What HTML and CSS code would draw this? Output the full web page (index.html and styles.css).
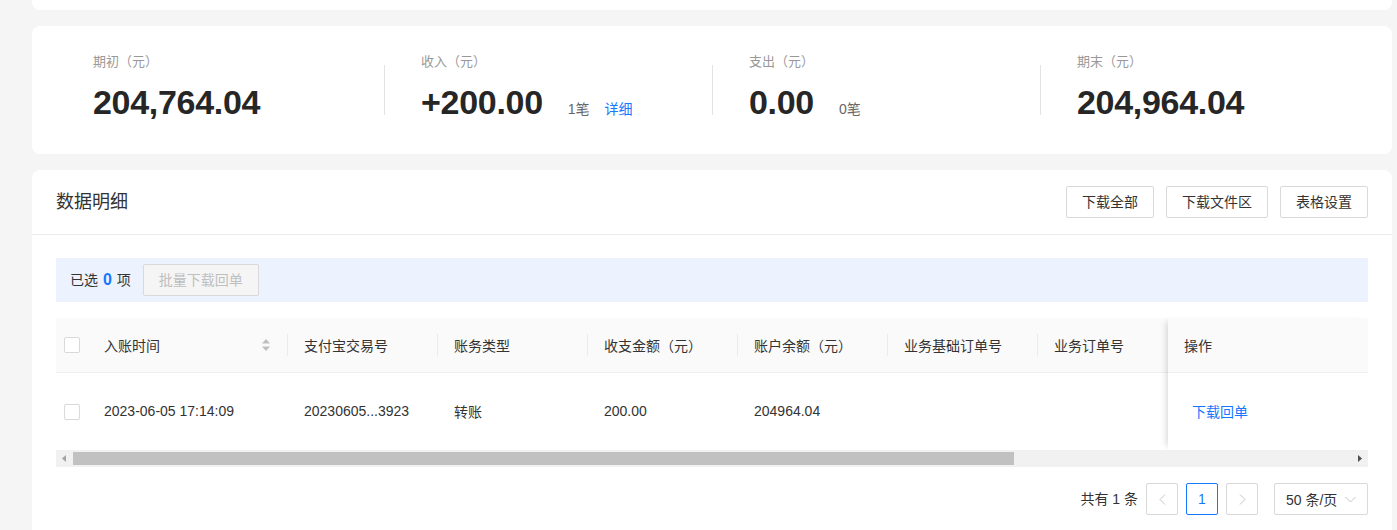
FILE: index.html
```html
<!DOCTYPE html>
<html lang="zh-CN">
<head>
<meta charset="utf-8">
<title>数据明细</title>
<link rel="stylesheet" href="styles.css">
</head>
<body>
<div class="page">
  <div class="card card-top"></div>

  <div class="card stats">
    <div class="stat">
      <div class="stat-label">期初（元）</div>
      <div class="stat-value"><span class="num">204,764.04</span></div>
    </div>
    <div class="stat">
      <div class="stat-label">收入（元）</div>
      <div class="stat-value"><span class="num">+200.00</span><span class="count">1笔</span><a class="link" href="#">详细</a></div>
    </div>
    <div class="stat">
      <div class="stat-label">支出（元）</div>
      <div class="stat-value"><span class="num">0.00</span><span class="count">0笔</span></div>
    </div>
    <div class="stat">
      <div class="stat-label">期末（元）</div>
      <div class="stat-value"><span class="num">204,964.04</span></div>
    </div>
  </div>

  <div class="card detail">
    <div class="detail-head">
      <h2 class="detail-title">数据明细</h2>
      <div class="actions">
        <button class="btn" type="button">下载全部</button>
        <button class="btn" type="button">下载文件区</button>
        <button class="btn" type="button">表格设置</button>
      </div>
    </div>

    <div class="detail-body">
      <div class="select-bar">
        <span class="sel-text">已选 <b class="sel-num">0</b> 项</span>
        <button class="btn btn-disabled" type="button" disabled>批量下载回单</button>
      </div>

      <div class="table">
        <div class="table-main">
          <div class="scroll-area">
            <div class="grid">
              <div class="th check"><span class="cb"></span></div>
              <div class="th sep sortable">入账时间
                <svg class="sort" width="8" height="12" viewBox="0 0 8 12"><polygon points="4,0 8,4.5 0,4.5" fill="#bfbfbf"/><polygon points="0,7.5 8,7.5 4,12" fill="#bfbfbf"/></svg>
              </div>
              <div class="th sep">支付宝交易号</div>
              <div class="th sep">账务类型</div>
              <div class="th sep">收支金额（元）</div>
              <div class="th sep">账户余额（元）</div>
              <div class="th sep">业务基础订单号</div>
              <div class="th sep">业务订单号</div>

              <div class="td check"><span class="cb"></span></div>
              <div class="td">2023-06-05 17:14:09</div>
              <div class="td">20230605...3923</div>
              <div class="td">转账</div>
              <div class="td">200.00</div>
              <div class="td">204964.04</div>
              <div class="td"></div>
              <div class="td"></div>
            </div>
          </div>
          <div class="fixed-col">
            <div class="th">操作</div>
            <div class="td td-op"><a class="link-op" href="#">下载回单</a></div>
          </div>
        </div>
        <div class="hscroll">
          <div class="sb-arrow"><svg width="4" height="7" viewBox="0 0 4 7"><polygon points="4,0 4,7 0,3.5" fill="#a3a3a3"/></svg></div>
          <div class="sb-track"><div class="sb-thumb" style="width:73.5%"></div></div>
          <div class="sb-arrow"><svg width="4" height="7" viewBox="0 0 4 7"><polygon points="0,0 4,3.5 0,7" fill="#505050"/></svg></div>
        </div>
      </div>

      <div class="pager">
        <span class="total">共有 1 条</span>
        <span class="pg"><svg width="7" height="11" viewBox="0 0 7 11"><polyline points="6,0.5 1,5.5 6,10.5" fill="none" stroke="#c4c4c4" stroke-width="1"/></svg></span>
        <span class="pg active">1</span>
        <span class="pg"><svg width="7" height="11" viewBox="0 0 7 11"><polyline points="1,0.5 6,5.5 1,10.5" fill="none" stroke="#c4c4c4" stroke-width="1"/></svg></span>
        <span class="size">50 条/页<svg width="11" height="7" viewBox="0 0 11 7"><polyline points="0.5,1 5.5,6 10.5,1" fill="none" stroke="#c4c4c4" stroke-width="1"/></svg></span>
      </div>
    </div>
  </div>
</div>
</body>
</html>
```

FILE: styles.css
```css
* { box-sizing: border-box; }

html, body {
  margin: 0;
  height: 530px;
  overflow: hidden;
}

body {
  background: #f5f5f5;
  font-family: "Liberation Sans", "Noto Sans CJK SC", sans-serif;
  font-size: 14px;
  color: #333;
}

.page {
  display: flex;
  flex-direction: column;
  gap: 16px;
  padding: 0 5px 0 32px;
}

.card {
  background: #fff;
  border-radius: 8px;
}

.card-top {
  height: 10px;
  border-radius: 0 0 8px 8px;
}

/* ---------- stats ---------- */
.stats {
  display: grid;
  grid-template-columns: repeat(4, 1fr);
  padding: 26px 24px 32px;
}

.stat {
  position: relative;
  padding-left: 37px;
}

.stat + .stat::before {
  content: "";
  position: absolute;
  left: 0;
  top: 13px;
  height: 50px;
  width: 1px;
  background: #e3e3e3;
}

.stat-label {
  font-size: 13px;
  line-height: 20px;
  color: #999;
}

.stat-value {
  display: flex;
  align-items: baseline;
  margin-top: 10px;
}

.num {
  font-size: 34px;
  line-height: 40px;
  font-weight: 700;
  letter-spacing: -0.3px;
  color: #262626;
}

.count {
  margin-left: 25px;
  font-size: 14px;
  line-height: 20px;
  color: #666;
}

.link {
  margin-left: 15px;
  font-size: 14px;
  line-height: 20px;
  color: #1677ff;
  text-decoration: none;
}

/* ---------- detail ---------- */
.detail {
  border-radius: 8px 8px 0 0;
}

.detail-head {
  height: 65px;
  border-bottom: 1px solid #ebebeb;
  display: flex;
  align-items: center;
  justify-content: space-between;
  padding: 0 24px;
}

.detail-title {
  margin: 0;
  font-size: 18px;
  font-weight: 400;
  line-height: 24px;
  color: #333;
}

.actions {
  display: flex;
  gap: 12px;
}

.btn {
  height: 32px;
  padding: 0 15px;
  border: 1px solid #d9d9d9;
  border-radius: 2px;
  background: #fff;
  font: inherit;
  font-size: 14px;
  line-height: 30px;
  color: #333;
}

.detail-body {
  padding: 23px 24px 15px;
}

.select-bar {
  height: 44px;
  background: #ecf3fe;
  display: flex;
  align-items: center;
  padding-left: 14px;
}

.sel-text {
  line-height: 20px;
  color: #333;
}

.sel-num {
  color: #1677ff;
  font-size: 16px;
  margin: 0 1px;
}

.btn-disabled {
  margin-left: 12px;
  background: #f5f5f5;
  color: #bfbfbf;
}

/* ---------- table ---------- */
.table {
  margin-top: 16px;
}

.table-main {
  display: flex;
}

.scroll-area {
  flex: 1;
  min-width: 0;
  overflow: hidden;
}

.grid {
  display: grid;
  grid-template-columns: 32px 200px repeat(6, 150px);
  width: max-content;
}

.th {
  height: 55px;
  background: #fafafa;
  border-bottom: 1px solid #efefef;
  display: flex;
  align-items: center;
  padding: 0 16px 1px;
  position: relative;
  color: #333;
  white-space: nowrap;
}

.td {
  height: 77px;
  display: flex;
  align-items: center;
  padding: 0 16px 1px;
  color: #333;
  white-space: nowrap;
}

.th.check, .td.check {
  padding: 0 8px;
}

.th.sep::after {
  content: "";
  position: absolute;
  right: 0;
  top: 50%;
  height: 22px;
  margin-top: -11px;
  width: 1px;
  background: #ebebeb;
}

.sortable {
  padding-right: 18px;
}

.sort {
  margin-left: auto;
}

.cb {
  width: 16px;
  height: 16px;
  border: 1px solid #d9d9d9;
  border-radius: 2px;
  background: #fff;
}

.fixed-col {
  width: 200px;
  flex: none;
  position: relative;
  background: #fff;
  box-shadow: -6px 0 6px -4px rgba(0, 0, 0, 0.14);
}

.td-op {
  padding-left: 24px;
}

.link-op {
  color: #1677ff;
  text-decoration: none;
}

/* ---------- scrollbar ---------- */
.hscroll {
  height: 17px;
  background: #f1f1f1;
  display: flex;
  align-items: center;
}

.sb-arrow {
  width: 16px;
  height: 17px;
  flex: none;
  display: flex;
  align-items: center;
  justify-content: center;
}

.sb-track {
  flex: 1;
  height: 100%;
  display: flex;
  align-items: center;
}

.sb-thumb {
  height: 13px;
  margin-left: 1px;
  background: #c1c1c1;
}

/* ---------- pager ---------- */
.pager {
  margin-top: 16px;
  display: flex;
  justify-content: flex-end;
  align-items: center;
  gap: 8px;
}

.total {
  line-height: 20px;
  color: #333;
}

.pg {
  width: 32px;
  height: 32px;
  border: 1px solid #d9d9d9;
  border-radius: 2px;
  background: #fff;
  display: flex;
  align-items: center;
  justify-content: center;
  color: #333;
}

.pg.active {
  border-color: #1677ff;
  color: #1677ff;
}

.size {
  margin-left: 8px;
  width: 94px;
  height: 32px;
  border: 1px solid #d9d9d9;
  border-radius: 2px;
  display: flex;
  align-items: center;
  justify-content: space-between;
  padding: 0 11px;
  color: #333;
}
```
